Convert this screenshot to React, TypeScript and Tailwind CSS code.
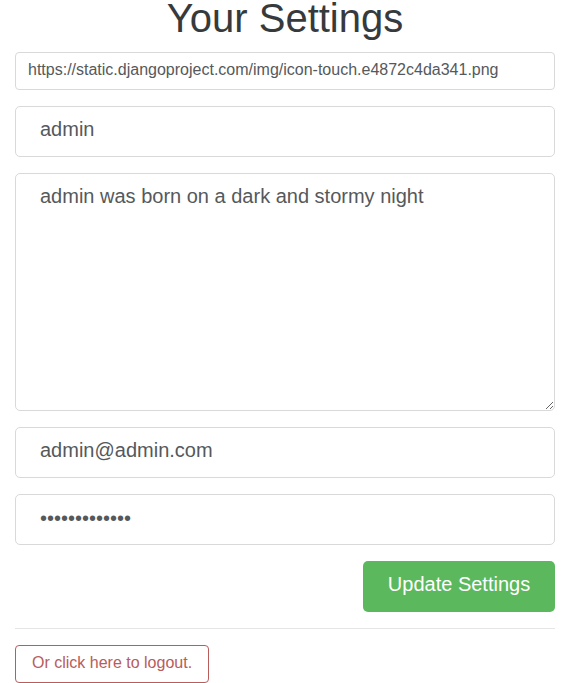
export default function App() {
  const field =
    "block w-full border border-[#d9d9d9] bg-white text-[#55595c] outline-none";

  return (
    <div className="min-h-screen bg-white font-['Liberation_Sans',Arial,sans-serif] text-[#373a3c]">
      <div className="px-[15px]">
        <h1 className="text-center text-[40px] font-normal leading-[36px] mb-[16px]">
          Your Settings
        </h1>

        <form className="flex flex-col gap-[16px]" onSubmit={(e) => e.preventDefault()}>
          <input
            type="text"
            defaultValue="https://static.djangoproject.com/img/icon-touch.e4872c4da341.png"
            className={`${field} h-[38px] rounded-[4px] px-[12px] pb-[2px] text-[16px] leading-[20px]`}
          />
          <input
            type="text"
            defaultValue="admin"
            className={`${field} h-[51px] rounded-[5px] px-[24px] pb-[4px] text-[20px] leading-[25px]`}
          />
          <textarea
            defaultValue="admin was born on a dark and stormy night"
            className={`${field} h-[238px] rounded-[5px] px-[24px] pt-[10px] pb-[12px] text-[20px] leading-[25px]`}
          />
          <input
            type="email"
            defaultValue="admin@admin.com"
            className={`${field} h-[51px] rounded-[5px] px-[24px] pb-[4px] text-[20px] leading-[25px]`}
          />
          <input
            type="password"
            defaultValue="adminpassword"
            className={`${field} h-[51px] rounded-[5px] px-[24px] pb-[2px] text-[20px] leading-[25px]`}
          />
          <div className="flex justify-end">
            <button
              type="submit"
              className="h-[51px] w-[192px] rounded-[5px] bg-[#5cb85c] pb-[4px] text-[20px] leading-[25px] text-white"
            >
              Update Settings
            </button>
          </div>
        </form>

        <hr className="mt-[16px] mb-[16px] border-0 border-t border-[#e5e5e5]" />

        <button className="h-[38px] rounded-[4px] border border-[#b85c5c] bg-white px-[16px] pb-[2px] text-[16px] leading-[20px] text-[#b85c5c]">
          Or click here to logout.
        </button>
      </div>
    </div>
  );
}
